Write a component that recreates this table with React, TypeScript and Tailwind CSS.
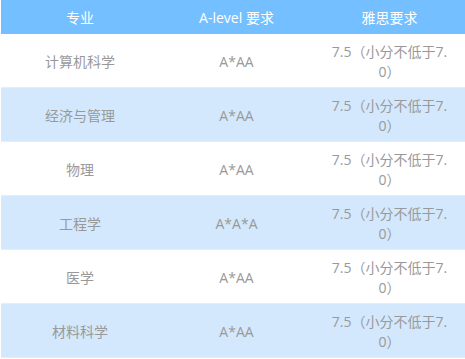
import React from "react";

const rows = [
  { name: "计算机科学", a: "A*AA" },
  { name: "经济与管理", a: "A*AA" },
  { name: "物理", a: "A*AA" },
  { name: "工程学", a: "A*A*A" },
  { name: "医学", a: "A*AA" },
  { name: "材料科学", a: "A*AA" },
];

export default function App() {
  return (
    <div
      className="w-[465px] h-[359px] bg-white pl-[1px] text-[14px]"
      style={{ fontFamily: '"Open Sans", "Noto Sans CJK SC", sans-serif' }}
    >
      <div className="flex h-[34px] bg-[#74bfff] text-white items-center">
        <div className="w-[158px] text-center">专业</div>
        <div className="w-[155px] text-center">A-level 要求</div>
        <div className="w-[151px] text-center">雅思要求</div>
      </div>
      {rows.map((r, i) => (
        <div
          key={i}
          className={
            i % 2 === 0
              ? "flex h-[54px] pt-[2px] items-center text-[#999999] bg-white border-b border-[#e4eef8]"
              : "flex h-[54px] pt-[2px] items-center text-[#999999] bg-[#d3e8fc] border-b border-[#e4eef8]"
          }
        >
          <div className="w-[158px] text-center">{r.name}</div>
          <div className="w-[155px] text-center">{r.a}</div>
          <div className="w-[151px] px-[14px] text-center leading-[20px] break-all">
            7.5（小分不低于7.0）
          </div>
        </div>
      ))}
    </div>
  );
}
